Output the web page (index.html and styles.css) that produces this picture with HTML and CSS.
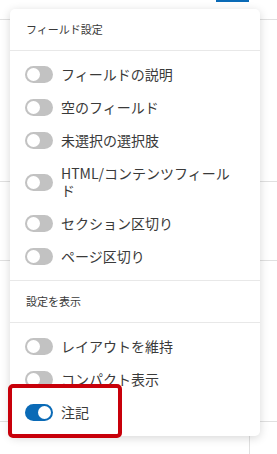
FILE: index.html
```html
<!DOCTYPE html>
<html lang="ja">
<head>
    <meta charset="UTF-8">
    <meta name="viewport" content="width=device-width, initial-scale=1.0">
    <title>フィールド設定</title>
    <link rel="stylesheet" href="styles.css">
</head>
<body>
    <div class="page">
        <div class="page-button"></div>
        <div class="page-row row-a"></div>
        <div class="page-row row-b"></div>
        <div class="page-row row-c"></div>
        <div class="page-row row-d"></div>
        <div class="page-col"></div>
    </div>

    <div class="menu">
        <div class="group-title">フィールド設定</div>
        <ul class="list">
            <li class="item"><span class="toggle"></span><span class="label">フィールドの説明</span></li>
            <li class="item"><span class="toggle"></span><span class="label">空のフィールド</span></li>
            <li class="item"><span class="toggle"></span><span class="label">未選択の選択肢</span></li>
            <li class="item"><span class="toggle"></span><span class="label">HTML/コンテンツフィールド</span></li>
            <li class="item"><span class="toggle"></span><span class="label">セクション区切り</span></li>
            <li class="item"><span class="toggle"></span><span class="label">ページ区切り</span></li>
        </ul>
        <div class="group-title with-top">設定を表示</div>
        <ul class="list">
            <li class="item"><span class="toggle"></span><span class="label">レイアウトを維持</span></li>
            <li class="item"><span class="toggle"></span><span class="label">コンパクト表示</span></li>
            <li class="item"><span class="toggle on"></span><span class="label">注記</span></li>
        </ul>
    </div>

    <div class="highlight"></div>
</body>
</html>
```

FILE: styles.css
```css
body {
    margin: 0;
    padding: 0;
    font-family: "Noto Sans CJK JP", "Noto Sans", sans-serif;
    background-color: #fff;
    color: #3a3a3a;
}
.page {
    position: relative;
    width: 277px;
    height: 454px;
    overflow: hidden;
}
.page-button {
    position: absolute;
    left: 216px;
    top: 0;
    width: 33px;
    height: 2px;
    background-color: #0a6ab6;
}
.page-row {
    position: absolute;
    left: 0;
    width: 277px;
    height: 1px;
    background-color: #e0e0e0;
}
.row-a { top: 19px; }
.row-b { top: 181px; }
.row-c { top: 260px; }
.row-d { top: 421px; }
.page-col {
    position: absolute;
    left: 249px;
    top: 420px;
    width: 1px;
    height: 40px;
    background-color: #e0e0e0;
}
.menu {
    position: absolute;
    left: 10px;
    top: 9px;
    width: 250px;
    background-color: #fff;
    border-radius: 5px;
    box-shadow: 0 2px 10px rgba(0, 0, 0, 0.16);
}
.group-title {
    padding: 12px 16px;
    font-size: 11px;
    line-height: 17px;
    border-bottom: 1px solid #e8e8e8;
}
.group-title.with-top {
    border-top: 1px solid #e8e8e8;
}
.list {
    list-style: none;
    margin: 0;
    padding: 7px 0;
}
.item {
    display: flex;
    align-items: center;
    padding: 8px 20px 8px 15px;
    font-size: 14px;
    line-height: 17px;
}
.toggle {
    position: relative;
    flex: none;
    width: 28px;
    height: 17px;
    border-radius: 9px;
    background-color: #c2c2c2;
    margin-right: 8px;
}
.toggle::after {
    content: "";
    position: absolute;
    left: 2px;
    top: 2px;
    width: 13px;
    height: 13px;
    border-radius: 50%;
    background-color: #fff;
}
.toggle.on {
    background-color: #0a6ab6;
}
.toggle.on::after {
    left: 13px;
}
.label {
    flex: 1;
}
.highlight {
    position: absolute;
    left: 8px;
    top: 384px;
    width: 106px;
    height: 46px;
    border: 4px solid #c8000a;
    border-radius: 5px;
}
```
